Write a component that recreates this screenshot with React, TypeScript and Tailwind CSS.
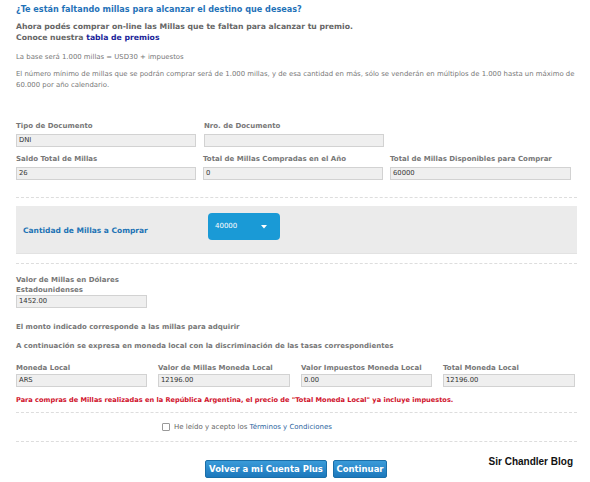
import React from "react";

function Field({
  label,
  value,
  width,
  label2,
  gap = "mt-[3px]",
}: {
  label: string;
  value: string;
  width: string;
  label2?: string;
  gap?: string;
}) {
  return (
    <div className={`flex flex-col ${width}`}>
      <div className="text-[7px] font-bold text-[#777] leading-[10px] whitespace-nowrap">{label}</div>
      {label2 && <div className="text-[7px] font-bold text-[#777] leading-[10px]">{label2}</div>}
      <div
        className={`${gap} h-[13px] bg-[#efefef] border border-[#d2d2d2] text-[6.8px] text-[#333] leading-[11px] px-[2px]`}
      >
        {value}
      </div>
    </div>
  );
}

function Divider() {
  return <div className="border-t border-dashed border-[#dddddd] w-full" />;
}

export default function App() {
  return (
    <div className="w-[590px] h-[482px] bg-white font-['DejaVu_Sans',sans-serif] relative overflow-hidden">
      <div className="pl-[16px] pr-[13px]">
        <h1 className="mt-[2px] font-['DejaVu_Sans_Condensed','DejaVu_Sans',sans-serif] text-[9px] font-bold text-[#1f72b8] leading-[14px] whitespace-nowrap">
          ¿Te están faltando millas para alcanzar el destino que deseas?
        </h1>
        <div className="mt-[5px] text-[7.7px] font-bold text-[#666] leading-[11px]">
          <p>Ahora podés comprar on-line las Millas que te faltan para alcanzar tu premio.</p>
          <p>
            Conoce nuestra <span className="text-[#1a1f99]">tabla de premios</span>
          </p>
        </div>
        <p className="mt-[9px] text-[6.9px] text-[#777] leading-[10px]">La base será 1.000 millas = USD30 + impuestos</p>
        <p className="mt-[7px] text-[6.9px] text-[#777] leading-[11px]">
          El número mínimo de millas que se podrán comprar será de 1.000 millas, y de esa cantidad en más, sólo se venderán en múltiplos de 1.000 hasta un máximo de 60.000 por año calendario.
        </p>

        <div className="mt-[30px] flex gap-[8px]">
          <Field label="Tipo de Documento" value="DNI" width="w-[180px]" />
          <Field label="Nro. de Documento" value="" width="w-[180px]" />
        </div>
        <div className="mt-[7px] flex gap-[7px]">
          <Field label="Saldo Total de Millas" value="26" width="w-[180px]" />
          <Field label="Total de Millas Compradas en el Año" value="0" width="w-[180px]" />
          <Field label="Total de Millas Disponibles para Comprar" value="60000" width="w-[181px]" />
        </div>

        <div className="mt-[17px]">
          <Divider />
        </div>
        <div className="mt-[8px] h-[48px] bg-[#ebebeb] border-b border-[#e2e2e2] flex items-center">
          <div className="w-[192px] pl-[7px] pt-[2px] text-[7.5px] font-bold text-[#2273b5]">Cantidad de Millas a Comprar</div>
          <div className="w-[72px] h-[27px] rounded-[4px] bg-[#1a9ad6] flex items-center justify-between pl-[7px] pr-[13px] -mt-[6px]">
            <span className="text-[7px] text-white">40000</span>
            <svg width="6" height="4" viewBox="0 0 6 4">
              <path d="M0 0 L6 0 L3 3.5 Z" fill="#ffffff" />
            </svg>
          </div>
        </div>
        <div className="mt-[9px]">
          <Divider />
        </div>

        <div className="mt-[11px] flex">
          <Field label="Valor de Millas en Dólares" label2="Estadounidenses" value="1452.00" width="w-[131px]" gap="mt-0" />
        </div>

        <p className="mt-[14px] text-[7px] font-bold text-[#777] leading-[10px]">El monto indicado corresponde a las millas para adquirir</p>
        <p className="mt-[9px] text-[7px] font-bold text-[#777] leading-[10px]">
          A continuación se expresa en moneda local con la discriminación de las tasas correspondientes
        </p>

        <div className="mt-[12px] flex gap-[11px]">
          <Field label="Moneda Local" value="ARS" width="w-[131px]" gap="mt-[1px]" />
          <Field label="Valor de Millas Moneda Local" value="12196.00" width="w-[132px]" gap="mt-[1px]" />
          <Field label="Valor Impuestos Moneda Local" value="0.00" width="w-[131px]" gap="mt-[1px]" />
          <Field label="Total Moneda Local" value="12196.00" width="w-[132px]" gap="mt-[1px]" />
        </div>

        <p className="mt-[8px] text-[6.6px] font-bold text-[#d0112b] leading-[10px] whitespace-nowrap">
          Para compras de Millas realizadas en la República Argentina, el precio de "Total Moneda Local" ya incluye impuestos.
        </p>
        <div className="mt-[7px]">
          <Divider />
        </div>
        <div className="mt-[9px] flex items-center ml-[146px] gap-[4px] h-[10px]">
          <span className="w-[8px] h-[8px] border border-[#999] rounded-[1px] bg-white" />
          <span className="text-[7px] text-[#666] leading-[10px]">
            He leído y acepto los <span className="text-[#2a64a0]">Términos y Condiciones</span>
          </span>
        </div>
        <div className="mt-[9px]">
          <Divider />
        </div>

        <div className="mt-[18px] flex items-start">
          <div className="w-[189px] shrink-0" />
          <button className="w-[122px] h-[18px] rounded-[2px] bg-gradient-to-b from-[#3a9bd9] to-[#1c78bc] border border-[#1a6ea8] text-white text-[8.5px] font-bold leading-[16px] whitespace-nowrap">
            Volver a mi Cuenta Plus
          </button>
          <button className="ml-[6px] w-[54px] h-[18px] rounded-[2px] bg-gradient-to-b from-[#3a9bd9] to-[#1c78bc] border border-[#1a6ea8] text-white text-[8.5px] font-bold leading-[16px]">
            Continuar
          </button>
          <div className="ml-auto -mt-[4px] pr-[4px] font-['Liberation_Sans',sans-serif] text-[10px] leading-[12px] font-bold text-[#111] whitespace-nowrap">
            Sir Chandler Blog
          </div>
        </div>
      </div>
    </div>
  );
}
